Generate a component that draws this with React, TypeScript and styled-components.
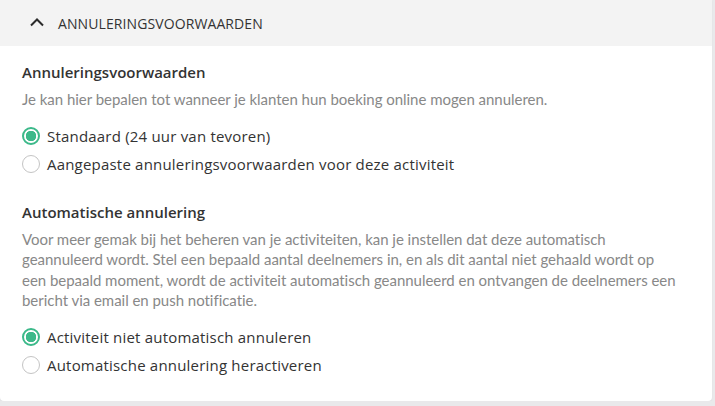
import { useState } from "react";
import styled, { createGlobalStyle } from "styled-components";

const GlobalStyle = createGlobalStyle`
  html, body {
    margin: 0;
    padding: 0;
    background: #e9e9eb;
  }
  body {
    font-family: "Open Sans", "Liberation Sans", sans-serif;
    color: #333;
  }
`;

type Option = { id: string; label: string };

const cancelOptions: Option[] = [
    { id: "standard", label: "Standaard (24 uur van tevoren)" },
    { id: "custom", label: "Aangepaste annuleringsvoorwaarden voor deze activiteit" },
];

const autoOptions: Option[] = [
    { id: "off", label: "Activiteit niet automatisch annuleren" },
    { id: "on", label: "Automatische annulering heractiveren" },
];

const RadioGroup = ({ options, value, onChange }: { options: Option[]; value: string; onChange: (v: string) => void }) => (
    <Options>
        {options.map((o) => (
            <RadioRow key={o.id} onClick={() => onChange(o.id)}>
                <RadioCircle $checked={value === o.id} />
                <span>{o.label}</span>
            </RadioRow>
        ))}
    </Options>
);

const App = () => {
    const [cancel, setCancel] = useState("standard");
    const [auto, setAuto] = useState("off");

    return (
        <>
            <GlobalStyle />
            <Card>
                <Header>
                    <svg width="16" height="10" viewBox="0 0 16 10" fill="none">
                        <path d="M2 8.5L8 2.5L14 8.5" stroke="#2b2b2b" strokeWidth="2" />
                    </svg>
                    <span>Annuleringsvoorwaarden</span>
                </Header>
                <Body>
                    <Section>
                        <Title>Annuleringsvoorwaarden</Title>
                        <Description>
                            Je kan hier bepalen tot wanneer je klanten hun boeking online mogen annuleren.
                        </Description>
                        <RadioGroup options={cancelOptions} value={cancel} onChange={setCancel} />
                    </Section>
                    <Section>
                        <Title>Automatische annulering</Title>
                        <Description>
                            Voor meer gemak bij het beheren van je activiteiten, kan je instellen dat deze automatisch
                            geannuleerd wordt. Stel een bepaald aantal deelnemers in, en als dit aantal niet gehaald
                            wordt op
                            <br />
                            een bepaald moment, wordt de activiteit automatisch geannuleerd en ontvangen de
                            deelnemers een bericht via email en push notificatie.
                        </Description>
                        <RadioGroup options={autoOptions} value={auto} onChange={setAuto} />
                    </Section>
                </Body>
            </Card>
        </>
    );
};

export default App;

const Card = styled.div`
    width: 712px;
    background: #fff;
    border-radius: 0 0 4px 4px;
    overflow: hidden;
    box-shadow: 0 1px 2px rgba(0, 0, 0, 0.06);
`;

const Header = styled.div`
    height: 46px;
    display: flex;
    align-items: center;
    gap: 13px;
    padding-left: 29px;
    background: #f3f3f3;
    font-size: 14px;
    letter-spacing: 0.1px;
    text-transform: uppercase;
    color: #333;

    svg {
        margin-top: -2px;
    }
`;

const Body = styled.div`
    display: flex;
    flex-direction: column;
    gap: 24px;
    padding: 16px 22px 22px 22px;
`;

const Section = styled.div`
    display: flex;
    flex-direction: column;
`;

const Title = styled.h3`
    margin: 0;
    font-size: 15px;
    line-height: 20px;
    font-weight: 600;
    color: #333;
`;

const Description = styled.p`
    margin: 7px 0 12px;
    font-family: Lato, "Open Sans", sans-serif;
    font-size: 15px;
    line-height: 20.5px;
    letter-spacing: -0.03px;
    color: #888;
`;

const Options = styled.div`
    display: flex;
    flex-direction: column;
`;

const RadioRow = styled.label`
    height: 28px;
    display: flex;
    align-items: center;
    gap: 7px;
    font-size: 15px;
    letter-spacing: 0.2px;
    color: #333;
    cursor: pointer;
`;

const RadioCircle = styled.span<{ $checked: boolean }>`
    box-sizing: border-box;
    width: 18px;
    height: 18px;
    flex-shrink: 0;
    border-radius: 50%;
    border: ${(p) => (p.$checked ? "2px solid #3cb98a" : "1.5px solid #c4c4c4")};
    background: ${(p) => (p.$checked ? "radial-gradient(circle, #3cb98a 0 5px, #fff 5.5px)" : "#fff")};
`;
